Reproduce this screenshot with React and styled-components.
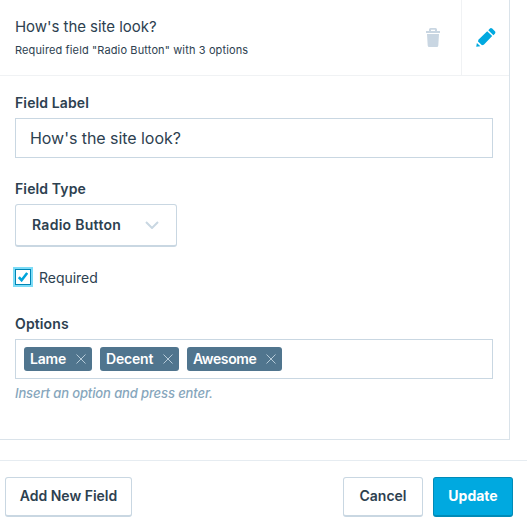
import React from "react";
import styled, { createGlobalStyle } from "styled-components";

const GlobalStyle = createGlobalStyle`
  *, *::before, *::after { box-sizing: border-box; }
  body {
    margin: 0;
    background: #fff;
    color: #2d4150;
    font-family: Inter, "Liberation Sans", sans-serif;
    font-size: 14px;
    overflow: hidden;
  }
`;

const Page = styled.main`
  display: flex;
  flex-direction: column;
  height: 530px;
`;

const Card = styled.section`
  display: flex;
  flex-direction: column;
  width: 510px;
  height: 440px;
  border-right: 1px solid #dae3ea;
  border-bottom: 1px solid #dae3ea;
`;

const CardHeader = styled.header`
  display: flex;
  height: 76px;
  border-bottom: 1px solid #f0f2f4;
`;

const Summary = styled.div`
  flex: 1;
  padding: 17px 0 0 15px;
  white-space: nowrap;
`;

const Title = styled.h2`
  margin: 0;
  font-size: 15px;
  font-weight: 400;
  line-height: 20px;
  letter-spacing: -0.04px;
`;

const Subtitle = styled.p`
  margin: 5px 0 0;
  font-size: 11px;
  line-height: 16px;
  letter-spacing: 0.13px;
`;

const IconButton = styled.button`
  display: flex;
  align-items: center;
  justify-content: center;
  width: ${(p) => p.$width}px;
  padding: 0;
  border: 0;
  border-left: ${(p) => (p.$divided ? "1px solid #f0f2f4" : "0")};
  background: none;
  color: ${(p) => p.$color};
`;

const Icon = styled.svg`
  display: block;
  flex: none;
`;

const Form = styled.div`
  display: flex;
  flex-direction: column;
  align-items: flex-start;
  padding: 18px 16px 0 15px;
`;

const Label = styled.label`
  height: 18px;
  margin-bottom: 6px;
  font-size: 14px;
  font-weight: 600;
  line-height: 18px;
  letter-spacing: 0.12px;
`;

const TextInput = styled.input`
  width: 478px;
  height: 40px;
  margin-bottom: 22px;
  padding: 0 14px;
  border: 1px solid #c9d7e2;
  border-radius: 0;
  background: #fff;
  color: #2d4150;
  font: 400 16px Inter, sans-serif;
  letter-spacing: -0.05px;
  outline: 0;
`;

const Button = styled.button`
  display: flex;
  align-items: center;
  justify-content: center;
  width: ${(p) => p.$width}px;
  height: 40px;
  padding: 0 0 2px;
  border: 1px solid ${(p) => (p.$primary ? "#008bb8" : "#c9d7e2")};
  border-bottom-width: 2px;
  border-radius: 3px;
  background: ${(p) => (p.$primary ? "#00a9e0" : "#fff")};
  color: ${(p) => (p.$primary ? "#fff" : "#2d4150")};
  font: ${(p) => (p.$primary ? 700 : 600)} 14px Inter, sans-serif;
  white-space: nowrap;
`;

const SelectButton = styled(Button)`
  height: 43px;
  justify-content: space-between;
  padding: 0 17px 1px 16px;
  letter-spacing: 0.28px;
`;

const CheckRow = styled.label`
  display: flex;
  align-items: center;
  height: 18px;
  margin: 21px 0 29px;
  gap: 8px;
  letter-spacing: -0.03px;
`;

const CheckBox = styled.span`
  display: flex;
  align-items: center;
  justify-content: center;
  width: 16px;
  height: 16px;
  border: 1px solid #0085b5;
  box-shadow: 0 0 0 2px #7cdcf7;
  color: #00a4db;
`;

const TagInput = styled.div`
  display: flex;
  gap: 8px;
  width: 478px;
  height: 40px;
  padding: 7px 8px;
  border: 1px solid #c9d7e2;
`;

const Tag = styled.span`
  display: flex;
  align-items: center;
  justify-content: space-between;
  width: ${(p) => p.$width}px;
  height: 24px;
  padding: 0 6px;
  border-radius: 3px;
  background: #50758e;
  color: #fff;
  font-weight: 600;
  line-height: 24px;
  letter-spacing: ${(p) => p.$spacing}px;
`;

const Hint = styled.p`
  margin: 5px 0 0;
  color: #86a6bc;
  font-size: 13px;
  font-style: italic;
  font-weight: 550;
  line-height: 18px;
  letter-spacing: -0.12px;
`;

const Footer = styled.footer`
  display: flex;
  gap: 10px;
  margin-top: 20px;
  padding: 16px 14px 0 5px;
  border-top: 1px solid #e6ecf1;
`;

const Spacer = styled.div`
  flex: 1;
`;

const CloseIcon = () => (
  <Icon width="10" height="10" viewBox="0 0 10 10" fill="none" stroke="#b5cad8">
    <path d="M.5.5l9 9M9.5.5l-9 9" />
  </Icon>
);

const options = [
  { name: "Lame", width: 68, spacing: -0.2 },
  { name: "Decent", width: 79, spacing: -0.2 },
  { name: "Awesome", width: 95, spacing: -0.4 },
];

export default function App() {
  return (
    <>
      <GlobalStyle />
      <Page>
        <Card>
          <CardHeader>
            <Summary>
              <Title>How's the site look?</Title>
              <Subtitle>Required field "Radio Button" with 3 options</Subtitle>
            </Summary>
            <IconButton $width={56} $color="#c9d6e2" aria-label="Delete field">
              <Icon width="14" height="19" viewBox="0 0 14 19" fill="currentColor">
                <path d="M3 3V1.5Q3 0 4.5 0h5Q11 0 11 1.5V3h3v2H0V3zM5 3h4V1.8H5zM1 6h12l-.7 11.5Q12.2 19 10.8 19H3.2Q1.8 19 1.7 17.5z" />
              </Icon>
            </IconButton>
            <IconButton $width={48} $divided $color="#00a9e0" aria-label="Edit field">
              <Icon width="20" height="20" viewBox="0 0 20 20" fill="currentColor">
                <path d="M11.2 3.2l5 4.9-8.4 8.7-1.8.5-4-3.9.4-1.7zM12.3 2.2l1.4-1.5Q14.9-.4 16.2.6l2.7 2.7q1 1.2 0 2.4l-1.5 1.5zM.9 15.1l3.5 3.1L.2 18.8z" />
              </Icon>
            </IconButton>
          </CardHeader>
          <Form>
            <Label htmlFor="field-label">Field Label</Label>
            <TextInput id="field-label" defaultValue="How's the site look?" />
            <Label>Field Type</Label>
            <SelectButton $width={162}>
              Radio Button
              <Icon width="14" height="8" viewBox="0 0 14 8" fill="none" stroke="#c9d7e2" strokeWidth="2">
                <path d="M1 1l6 6 6-6" />
              </Icon>
            </SelectButton>
            <CheckRow>
              <CheckBox>
                <Icon width="10" height="10" viewBox="0 0 10 10" fill="none" stroke="currentColor" strokeWidth="2.6">
                  <path d="M.8 5.2l2.8 3L9.2 1" />
                </Icon>
              </CheckBox>
              Required
            </CheckRow>
            <Label>Options</Label>
            <TagInput>
              {options.map((o) => (
                <Tag key={o.name} $width={o.width} $spacing={o.spacing}>
                  {o.name}
                  <CloseIcon />
                </Tag>
              ))}
            </TagInput>
            <Hint>Insert an option and press enter.</Hint>
          </Form>
        </Card>
        <Footer>
          <Button $width={127}>Add New Field</Button>
          <Spacer />
          <Button $width={80}>Cancel</Button>
          <Button $width={80} $primary>Update</Button>
        </Footer>
      </Page>
    </>
  );
}
